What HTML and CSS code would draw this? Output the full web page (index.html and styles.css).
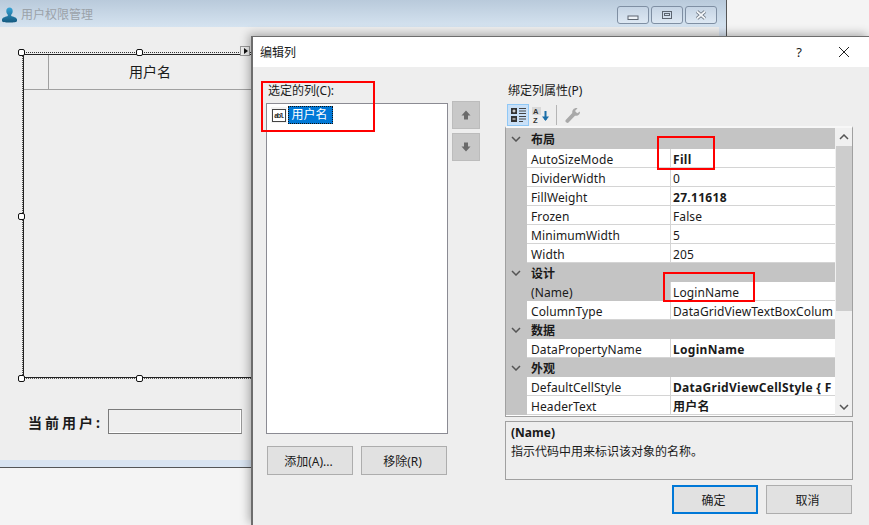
FILE: index.html
```html
<!DOCTYPE html>
<html lang="zh-CN">
<head>
    <meta charset="UTF-8">
    <title>编辑列</title>
    <link rel="stylesheet" href="styles.css">
</head>
<body>

<div class="main-window">
    <div class="main-title">
        <svg class="user-icon" width="16" height="16" viewBox="0 0 16 16">
            <defs>
                <linearGradient id="userFill" x1="0" y1="0" x2="0" y2="1">
                    <stop offset="0" stop-color="#35a3d6"/>
                    <stop offset="1" stop-color="#14597f"/>
                </linearGradient>
            </defs>
            <path fill="url(#userFill)" d="M8.500 .500c2 0 3.200 1.500 3.200 3.500 0 1.600-.7 3-1.500 3.800v1.200c1.800.6 5.300 1.400 5.800 3.300v1.700c0 1-3 1.500-7.500 1.500S1 15 1 14v-1.700c.5-1.900 4-2.700 5.800-3.300V7.800C6 7 5.300 5.600 5.300 4c0-2 1.200-3.500 3.200-3.500z"/>
        </svg>
        <span class="main-title-text">用户权限管理</span>
        <div class="win-buttons">
            <div class="win-btn">
                <svg class="min-icon" width="12" height="8" viewBox="0 0 12 8"><rect x="1" y="3" width="10" height="3.500" fill="#eef3f8" stroke="#5c6570"/></svg>
            </div>
            <div class="win-btn">
                <svg width="12" height="10" viewBox="0 0 12 10"><rect x="1.500" y="1.500" width="9" height="7" fill="none" stroke="#5c6570"/><rect x="3.500" y="3.500" width="5" height="2" fill="none" stroke="#5c6570"/></svg>
            </div>
            <div class="win-btn">
                <svg width="14" height="10" viewBox="0 0 14 10"><path d="M3 1.500l8 7M11 1.500l-8 7" fill="none" stroke="#68727e" stroke-width="3.500"/><path d="M3 1.500l8 7M11 1.500l-8 7" fill="none" stroke="#f4f7fa" stroke-width="1.700"/></svg>
            </div>
        </div>
    </div>
    <div class="main-client">
        <div class="designer">
            <div class="user-grid">
                <div class="grid-head">
                    <div class="grid-corner"></div>
                    <div class="grid-col">用户名</div>
                </div>
            </div>
            <span class="handle handle-tl"></span>
            <span class="handle handle-tm"></span>
            <span class="handle handle-ml"></span>
            <span class="handle handle-bl"></span>
            <span class="handle handle-bm"></span>
            <span class="smart-tag"></span>
        </div>
        <div class="current-user">
            <label class="current-label">当前用户:</label>
            <div class="current-input"></div>
        </div>
    </div>
    <div class="main-bottom"></div>
</div>

<div class="dialog">
    <div class="dialog-title">
        <span class="dialog-title-text">编辑列</span>
        <span class="help">?</span>
        <svg class="close" width="12" height="12" viewBox="0 0 12 12"><path d="M1 1l10 10M11 1L1 11" stroke="#222" stroke-width="1" fill="none"/></svg>
    </div>
    <div class="dialog-body">
        <div class="left-col">
            <div class="field-label field-label-left">选定的列(C):</div>
            <div class="column-list">
                <div class="column-item">
                    <div class="column-icon">
                        <svg width="14" height="13" viewBox="0 0 14 13">
                            <rect x=".5" y=".5" width="13" height="12" fill="#fff" stroke="#444"/>
                            <text x="7" y="9" font-size="7.500" font-weight="700" text-anchor="middle" fill="#333" font-family="Liberation Mono, monospace" textLength="10">abl</text>
                        </svg>
                    </div>
                    <span class="column-name">用户名</span>
                </div>
            </div>
            <div class="left-buttons">
                <button class="btn">添加(A)...</button>
                <button class="btn">移除(R)</button>
            </div>
        </div>
        <div class="arrow-col">
            <div class="arrow-btn">
                <svg width="12" height="12" viewBox="0 0 12 12"><path d="M6 1.500L10.500 6.500H8V10.500H4V6.500H1.500z" fill="#6a6a6a"/></svg>
            </div>
            <div class="arrow-btn">
                <svg width="12" height="12" viewBox="0 0 12 12"><path d="M6 10.500L10.500 5.500H8V1.500H4V5.500H1.500z" fill="#6a6a6a"/></svg>
            </div>
        </div>
        <div class="right-col">
            <div class="field-label field-label-right">绑定列属性(P)</div>
            <div class="toolbar">
                <div class="tool tool-on">
                    <svg width="16" height="16" viewBox="0 0 16 16">
                        <path d="M1 1h6v6H1zM1 9h6v6H1z" fill="#333"/>
                        <path d="M2.500 4h3M4 2.500v3M2.500 12h3" stroke="#fff"/>
                        <path d="M9 1.500h7M9 4h7M9 6.500h7M9 9.500h7M9 12h7M9 14.500h4" stroke="#444"/>
                    </svg>
                </div>
                <div class="tool">
                    <svg width="18" height="17" viewBox="0 0 18 17">
                        <rect x="0" y="0" width="9" height="8" fill="#d8d8d8"/>
                        <text x="1" y="7" font-size="7.500" font-weight="700" fill="#333" font-family="Liberation Sans, sans-serif">A</text>
                        <text x="1" y="15.500" font-size="7.500" font-weight="700" fill="#333" font-family="Liberation Sans, sans-serif">Z</text>
                        <path d="M13.500 4v9" stroke="#1b6ea8" stroke-width="2" fill="none"/>
                        <path d="M10 9.500h7l-3.500 4.500z" fill="#1b6ea8"/>
                    </svg>
                </div>
                <div class="tool-sep"></div>
                <div class="tool">
                    <svg width="17" height="17" viewBox="0 0 17 17"><path d="M16 4.500c.3 2.800-2 5-5 4.200L4.500 15.500c-1.300 1.300-4-1-2.800-2.500L8.300 6C7.700 3 10.500 .5 13.500 1.200L11 4l2.200 2.300z" fill="#a9a9a9"/></svg>
                </div>
            </div>
            <div class="prop-grid">
                <div class="prop-rows">
                    <div class="cat-row cat-first"><svg class="chev" width="10" height="6" viewBox="0 0 10 6"><path d="M1 1l4 4 4-4" fill="none" stroke="#555" stroke-width="1.500"/></svg><span>布局</span></div>
                    <div class="prop-row"><span class="prop-name">AutoSizeMode</span><span class="prop-value bold">Fill</span></div>
                    <div class="prop-row"><span class="prop-name">DividerWidth</span><span class="prop-value">0</span></div>
                    <div class="prop-row"><span class="prop-name">FillWeight</span><span class="prop-value bold">27.11618</span></div>
                    <div class="prop-row"><span class="prop-name">Frozen</span><span class="prop-value">False</span></div>
                    <div class="prop-row"><span class="prop-name">MinimumWidth</span><span class="prop-value">5</span></div>
                    <div class="prop-row"><span class="prop-name">Width</span><span class="prop-value">205</span></div>
                    <div class="cat-row"><svg class="chev" width="10" height="6" viewBox="0 0 10 6"><path d="M1 1l4 4 4-4" fill="none" stroke="#555" stroke-width="1.500"/></svg><span>设计</span></div>
                    <div class="prop-row prop-selected"><span class="prop-name">(Name)</span><span class="prop-value">LoginName</span></div>
                    <div class="prop-row"><span class="prop-name">ColumnType</span><span class="prop-value">DataGridViewTextBoxColum</span></div>
                    <div class="cat-row"><svg class="chev" width="10" height="6" viewBox="0 0 10 6"><path d="M1 1l4 4 4-4" fill="none" stroke="#555" stroke-width="1.500"/></svg><span>数据</span></div>
                    <div class="prop-row"><span class="prop-name">DataPropertyName</span><span class="prop-value bold">LoginName</span></div>
                    <div class="cat-row"><svg class="chev" width="10" height="6" viewBox="0 0 10 6"><path d="M1 1l4 4 4-4" fill="none" stroke="#555" stroke-width="1.500"/></svg><span>外观</span></div>
                    <div class="prop-row"><span class="prop-name">DefaultCellStyle</span><span class="prop-value bold">DataGridViewCellStyle { F</span></div>
                    <div class="prop-row"><span class="prop-name">HeaderText</span><span class="prop-value bold">用户名</span></div>
                </div>
                <div class="scrollbar">
                    <div class="scroll-arrow"><svg width="10" height="6" viewBox="0 0 10 6"><path d="M1 5l4-4 4 4" fill="none" stroke="#555" stroke-width="1.500"/></svg></div>
                    <div class="scroll-thumb"></div>
                    <div class="scroll-arrow scroll-arrow-down"><svg width="10" height="6" viewBox="0 0 10 6"><path d="M1 1l4 4 4-4" fill="none" stroke="#555" stroke-width="1.500"/></svg></div>
                </div>
            </div>
            <div class="description">
                <div class="desc-title">(Name)</div>
                <div class="desc-text">指示代码中用来标识该对象的名称。</div>
            </div>
            <div class="dialog-buttons">
                <button class="btn btn-default">确定</button>
                <button class="btn">取消</button>
            </div>
        </div>
    </div>
</div>

<div class="red-box red-list"></div>
<div class="red-box red-fill"></div>
<div class="red-box red-name"></div>

</body>
</html>
```

FILE: styles.css
```css
html, body {
    margin: 0;
    padding: 0;
    height: 100%;
    overflow: hidden;
}
body {
    position: relative;
    background-color: #f4f4f4;
    font-family: "Noto Sans", "Noto Sans CJK SC", sans-serif;
    font-size: 12px;
    color: #1a1a1a;
}

/* back window */
.main-window {
    position: absolute;
    left: 0;
    top: 0;
    width: 726px;
    height: 467px;
    border-right: 1px solid #555;
    border-bottom: 1px solid #555;
    background-color: #d9e4f1;
}
.main-title {
    display: flex;
    align-items: center;
    height: 27px;
    background: linear-gradient(#b9cadb, #d5e3f0);
}
.user-icon {
    margin-left: 1px;
    margin-right: 4px;
    margin-top: 2px;
}
.main-title-text {
    color: #9ba2a9;
    font-size: 12px;
}
.win-buttons {
    display: flex;
    gap: 2px;
    margin-left: auto;
    margin-right: 9px;
    margin-top: 3px;
}
.win-btn {
    display: flex;
    align-items: center;
    justify-content: center;
    width: 30px;
    height: 16px;
    border: 1px solid #7f8fa3;
    border-radius: 3px;
    background: linear-gradient(#c5d4e4, #dde8f3);
}
.min-icon {
    margin-top: 3px;
}
.main-client {
    width: 719px;
    height: 433px;
    background-color: #eeeeee;
    overflow: hidden;
}
.main-bottom {
    height: 7px;
}

/* designer surface */
.designer {
    position: relative;
    width: 600px;
    height: 325px;
    margin-left: 22px;
    margin-top: 25px;
    border-top: 1px dotted #333;
    border-bottom: 1px dotted #555;
    border-left: 1px dotted #555;
}
.user-grid {
    box-sizing: border-box;
    width: 100%;
    height: 324px;
    margin-top: 1px;
    border: 1px solid #222;
    border-left-width: 1px;
    border-right: none;
}
.grid-head {
    display: flex;
    height: 34px;
    border-bottom: 1px solid #a0a0a0;
}
.grid-corner {
    width: 24px;
    border-right: 1px solid #a0a0a0;
}
.grid-col {
    width: 202px;
    line-height: 34px;
    text-align: center;
    font-size: 14px;
}
.handle {
    position: absolute;
    box-sizing: border-box;
    width: 7px;
    height: 7px;
    background-color: #fff;
    border: 1px solid #111;
    border-radius: 2px;
}
.handle-tl { left: -5px; top: -4px; }
.handle-tm { left: 113px; top: -4px; }
.handle-ml { left: -5px; top: 160px; }
.handle-bl { left: -5px; top: 322px; }
.handle-bm { left: 113px; top: 322px; }
.smart-tag {
    position: absolute;
    left: 217px;
    top: -7px;
    box-sizing: border-box;
    width: 10px;
    height: 10px;
    background-color: #eee;
    border: 1px solid #999;
}
.smart-tag::after {
    content: "";
    position: absolute;
    left: 3px;
    top: 1px;
    border-left: 4px solid #111;
    border-top: 3px solid transparent;
    border-bottom: 3px solid transparent;
}
.current-user {
    display: flex;
    align-items: center;
    margin-top: 30px;
    margin-left: 28px;
}
.current-label {
    width: 80px;
    font-size: 14px;
    font-weight: 700;
    letter-spacing: 3px;
    white-space: nowrap;
}
.current-input {
    box-sizing: border-box;
    width: 134px;
    height: 25px;
    border: 1px solid #7a7a7a;
    border-right-color: #999;
    box-shadow: inset -1px -1px 0 #fff;
}

/* dialog */
.dialog {
    position: absolute;
    left: 251px;
    top: 36px;
    box-sizing: border-box;
    width: 618px;
    height: 489px;
    border-left: 2px solid #6d6d6d;
    border-top: 1px solid #6d6d6d;
    background-color: #eeeeee;
    box-shadow: -2px -2px 9px rgba(0, 0, 0, .3);
}
.dialog-title {
    display: flex;
    align-items: center;
    height: 30px;
    background-color: #fff;
}
.dialog-title-text {
    margin-left: 7px;
}
.help {
    margin-left: auto;
    margin-right: 36px;
    font-size: 13px;
}
.close {
    margin-right: 19px;
}
.dialog-body {
    display: flex;
}
.left-col {
    width: 182px;
    margin-left: 13px;
}
.field-label {
    height: 14px;
    margin-top: 17px;
    line-height: 14px;
}
.field-label-left {
    padding-left: 2px;
}
.field-label-right {
    padding-left: 3px;
}
.column-list {
    box-sizing: border-box;
    height: 331px;
    margin-top: 5px;
    padding: 2px 4px;
    background-color: #fff;
    border: 1px solid #8b8b93;
}
.column-item {
    display: flex;
    align-items: center;
    gap: 1px;
}
.column-icon {
    display: flex;
    align-items: center;
    justify-content: center;
    width: 16px;
    height: 16px;
    background-color: #f2f2f2;
}
.column-name {
    box-sizing: border-box;
    width: 45px;
    height: 18px;
    padding-right: 2px;
    line-height: 15px;
    text-align: center;
    color: #fff;
    background-color: #0078d7;
    border: 1px dotted #111;
}
.left-buttons {
    display: flex;
    gap: 8px;
    margin-top: 12px;
    margin-left: 1px;
}
.btn {
    box-sizing: border-box;
    width: 86px;
    height: 29px;
    padding: 0 3px 0 0;
    font-family: inherit;
    font-size: 12px;
    color: #1a1a1a;
    background-color: #e1e1e1;
    border: 1px solid #adadad;
}
.btn-default {
    border: 2px solid #0078d7;
}
.arrow-col {
    display: flex;
    flex-direction: column;
    gap: 4px;
    margin-left: 4px;
    margin-top: 34px;
}
.arrow-btn {
    display: flex;
    align-items: center;
    justify-content: center;
    box-sizing: border-box;
    width: 28px;
    height: 28px;
    background-color: #c8c8c8;
    border: 1px solid #bcbcbc;
}
.right-col {
    width: 348px;
    margin-left: 25px;
}
.toolbar {
    display: flex;
    align-items: center;
    height: 22px;
    margin-top: 6px;
    margin-left: 2px;
    gap: 1px;
}
.tool {
    display: flex;
    align-items: center;
    justify-content: center;
    width: 22px;
    height: 22px;
}
.tool-on {
    box-sizing: border-box;
    background-color: #c9e0f7;
    border: 1px solid #90c8f6;
}
.tool-sep {
    width: 1px;
    height: 20px;
    margin: 0 3px;
    background-color: #b5b5b5;
}

/* property grid */
.prop-grid {
    display: flex;
    box-sizing: border-box;
    width: 348px;
    height: 291px;
    border: 1px solid #a0a0a0;
    border-top: 2px solid #f7f7f7;
    background-color: #fff;
    overflow: hidden;
}
.prop-rows {
    width: 329px;
    flex-shrink: 0;
    overflow: hidden;
}
.cat-row {
    display: flex;
    align-items: center;
    height: 19px;
    background-color: #c4c4c4;
    font-weight: 700;
}
.cat-first {
    height: 21px;
}
.chev {
    margin-left: 5px;
    margin-right: 10px;
}
.prop-row {
    display: flex;
    box-sizing: border-box;
    height: 19px;
    line-height: 18px;
    padding-left: 21px;
    background-color: #c4c4c4;
}
.prop-name {
    box-sizing: border-box;
    width: 143px;
    padding-left: 4px;
    padding-top: 2px;
    background-color: #fff;
    border-bottom: 1px solid #d4d4d4;
    letter-spacing: .1px;
    white-space: nowrap;
}
.prop-value {
    box-sizing: border-box;
    flex: 1;
    min-width: 0;
    padding-left: 2px;
    padding-top: 2px;
    background-color: #fff;
    border-left: 1px solid #d4d4d4;
    border-bottom: 1px solid #d4d4d4;
    letter-spacing: .1px;
    white-space: nowrap;
    overflow: hidden;
}
.prop-selected .prop-name {
    background-color: #c4c4c4;
    border-bottom-color: #c4c4c4;
}
.bold {
    font-weight: 700;
    letter-spacing: .3px;
}
.scrollbar {
    display: flex;
    flex-direction: column;
    flex: 1;
    padding-left: 1px;
    background-color: #f0f0f0;
}
.scroll-arrow {
    display: flex;
    align-items: center;
    justify-content: center;
    height: 18px;
}
.scroll-arrow-down {
    margin-top: auto;
}
.scroll-thumb {
    height: 165px;
    background-color: #cdcdcd;
}
.description {
    box-sizing: border-box;
    height: 59px;
    margin-top: 4px;
    padding: 4px 5px;
    border: 1px solid #a0a0a0;
}
.desc-title {
    font-weight: 700;
    line-height: 14px;
}
.desc-text {
    margin-top: 4px;
    line-height: 15px;
}
.dialog-buttons {
    display: flex;
    justify-content: flex-end;
    gap: 8px;
    margin-top: 5px;
    margin-right: 1px;
}

/* red annotation boxes drawn over the screenshot */
.red-box {
    position: absolute;
    box-sizing: border-box;
    border: 2px solid #f00;
}
.red-list { left: 261px; top: 81px; width: 114px; height: 51px; }
.red-fill { left: 657px; top: 136px; width: 58px; height: 34px; }
.red-name { left: 663px; top: 272px; width: 92px; height: 30px; }
```
